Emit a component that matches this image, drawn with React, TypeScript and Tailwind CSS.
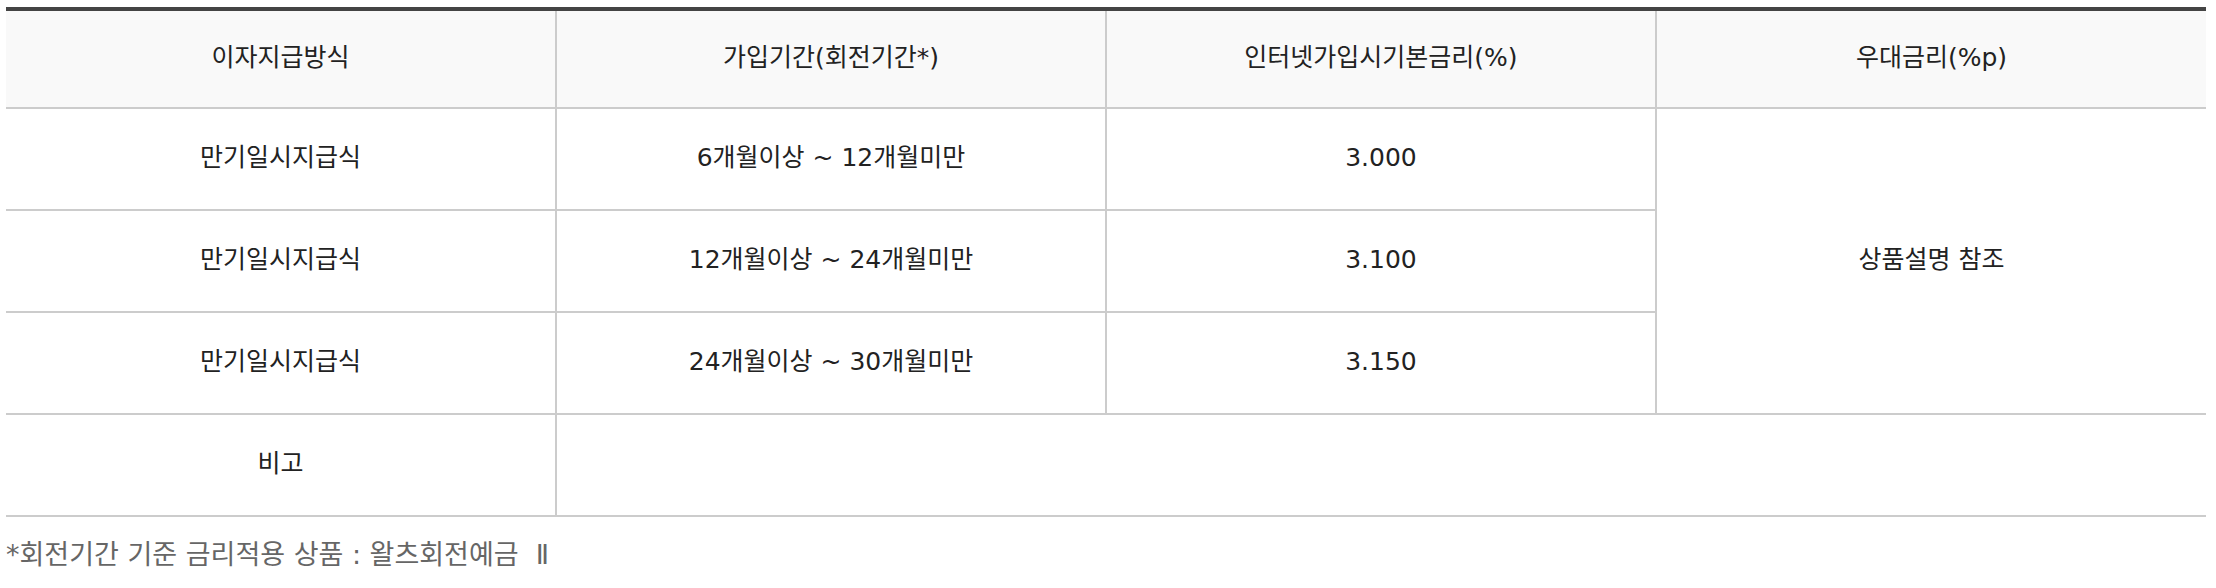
const rows = [
  { period: '6개월이상 ~ 12개월미만', rate: '3.000' },
  { period: '12개월이상 ~ 24개월미만', rate: '3.100' },
  { period: '24개월이상 ~ 30개월미만', rate: '3.150' },
];

const cell = 'flex items-center justify-center border-b-2 border-[#cccccc] pb-[2px] text-[25px] text-[#222222]';

export default function App() {
  return (
    <div className="bg-white pl-[6px] pt-[7px] font-['DejaVu_Sans','Noto_Sans_CJK_KR',sans-serif]">
      <div className="grid w-[2200px] grid-cols-[551px_550px_550px_549px] border-t-4 border-[#444444]">
        {/* header */}
        <div className={`${cell} h-[98px] border-r-2 bg-[#f9f9f9]`}>이자지급방식</div>
        <div className={`${cell} h-[98px] border-r-2 bg-[#f9f9f9]`}>가입기간(회전기간*)</div>
        <div className={`${cell} h-[98px] border-r-2 bg-[#f9f9f9]`}>인터넷가입시기본금리(%)</div>
        <div className={`${cell} h-[98px] bg-[#f9f9f9]`}>우대금리(%p)</div>

        {rows.map((r, i) => (
          <div key={r.rate} className="contents">
            <div className={`${cell} h-[102px] border-r-2`}>만기일시지급식</div>
            <div className={`${cell} h-[102px] border-r-2`}>{r.period}</div>
            <div className={`${cell} h-[102px] border-r-2`}>{r.rate}</div>
            {i === 0 && <div className={`${cell} row-span-3`}>상품설명 참조</div>}
          </div>
        ))}

        <div className={`${cell} h-[102px] border-r-2`}>비고</div>
        <div className={`${cell} col-span-3 h-[102px]`}></div>
      </div>

      <p className="mt-[22px] text-[27px] leading-[32px] text-[#666666]">
        *회전기간 기준 금리적용 상품 : 왈츠회전예금{'\u00a0 '}Ⅱ
      </p>
    </div>
  );
}
